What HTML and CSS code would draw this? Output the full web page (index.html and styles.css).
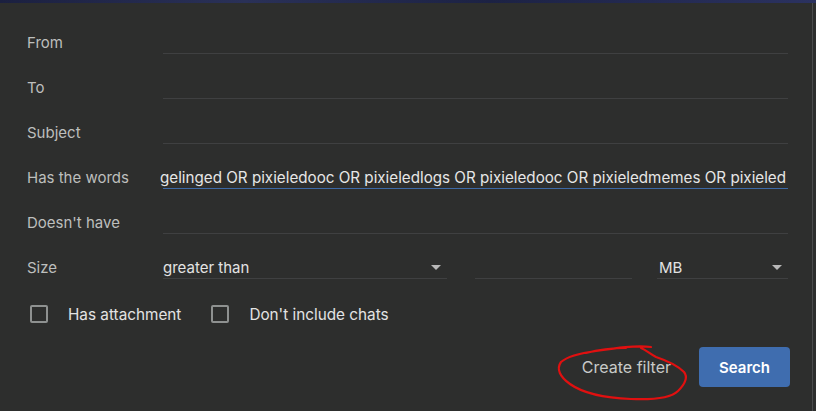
FILE: index.html
```html
<!DOCTYPE html>
<html lang="en">

<head>
    <meta charset="UTF-8">
    <meta name="viewport" content="width=device-width, initial-scale=1.0">
    <title>Search options</title>
    <link rel="stylesheet" href="styles.css">
</head>

<body>
    <div class="sky-strip"></div>

    <div class="filter-panel">
        <div class="field-row">
            <div class="field-label">From</div>
            <div class="field-input"></div>
        </div>
        <div class="field-row">
            <div class="field-label">To</div>
            <div class="field-input"></div>
        </div>
        <div class="field-row">
            <div class="field-label">Subject</div>
            <div class="field-input"></div>
        </div>
        <div class="field-row">
            <div class="field-label">Has the words</div>
            <div class="field-input focused">
                <span class="scrolled-text">gelinged OR pixieledooc OR pixieledlogs OR pixieledooc OR pixieledmemes OR pixieled</span>
            </div>
        </div>
        <div class="field-row">
            <div class="field-label">Doesn't have</div>
            <div class="field-input"></div>
        </div>
        <div class="field-row">
            <div class="field-label">Size</div>
            <div class="size-fields">
                <div class="field-input select-compare">
                    <span>greater than</span>
                    <span class="select-arrow"></span>
                </div>
                <div class="field-input size-number"></div>
                <div class="field-input select-unit">
                    <span class="unit-text">MB</span>
                    <span class="select-arrow"></span>
                </div>
            </div>
        </div>

        <div class="check-row">
            <label class="check-item">
                <span class="check-box"></span>
                Has attachment
            </label>
            <label class="check-item">
                <span class="check-box"></span>
                Don't include chats
            </label>
        </div>

        <div class="button-row">
            <button class="text-button">Create filter</button>
            <button class="search-button">Search</button>

            <!-- красная пометка от руки поверх кнопки -->
            <svg class="scribble" width="150" height="62" viewBox="0 0 150 62">
                <path d="M95 3 C80 1 60 4 40 7 C25 9 12 12 5 18 C0 25 4 33 14 40 C28 50 50 54 75 55 C100 56 115 54 122 47 C129 40 132 33 128 28 C122 22 112 17 100 13 C94 10 90 6 85 4 M70 4 C60 4 45 5 30 9"
                    fill="none" stroke="#e01010" stroke-width="2.2" stroke-linecap="round" stroke-linejoin="round"/>
            </svg>
        </div>
    </div>
</body>

</html>
```

FILE: styles.css
```css
html, body {
    margin: 0;
    padding: 0;
    background: #2d2e2d;
    font-family: Inter, Roboto, "Liberation Sans", Arial, sans-serif;
    overflow: hidden;
}

/* полоска фоновой картинки сверху */
.sky-strip {
    height: 3px;
    background: linear-gradient(90deg, #1b2040, #2a3158 30%, #1c2244 60%, #2b3260);
}

.filter-panel {
    width: 785px;
    height: 391px;
    padding: 17px 0 0 27px;
    border-right: 1px solid #4a4b4c;
    background: #2d2e2d;
}

.field-row {
    display: flex;
    align-items: center;
    height: 45px;
}

.field-label {
    width: 136px;
    font-size: 15px;
    color: #bdbfbd;
}

.field-input {
    width: 625px;
    height: 22px;
    border-bottom: 1px solid #3f4041;
    font-size: 15px;
    color: #e3e3e3;
    display: flex;
    align-items: center;
    white-space: nowrap;
    box-sizing: border-box;
    margin-top: 1px;
}

.field-input.focused {
    border-bottom-color: #3d69a6;
}

.scrolled-text {
    margin-left: -3px;
    font-size: 15.2px;
    color: #e6e6e6;
}

.size-fields {
    display: flex;
    width: 625px;
}

.select-compare {
    width: 284px;
    justify-content: space-between;
}

.size-number {
    width: 157px;
    margin-left: 28px;
}

.select-unit {
    width: 131px;
    margin-left: 25px;
    justify-content: space-between;
}

.unit-text {
    margin-left: 2px;
}

.select-arrow {
    width: 0;
    height: 0;
    border-left: 5px solid transparent;
    border-right: 5px solid transparent;
    border-top: 5px solid #b8b8b8;
    margin-right: 6px;
}

.check-row {
    display: flex;
    align-items: center;
    height: 48px;
    padding-left: 3px;
}

.check-item {
    display: flex;
    align-items: center;
    font-size: 15.3px;
    color: #e3e3e3;
    margin-right: 30px;
}

.check-box {
    width: 14px;
    height: 14px;
    border: 2px solid #8e9190;
    border-radius: 2px;
    margin-right: 20px;
}

.button-row {
    position: relative;
    display: flex;
    justify-content: flex-end;
    align-items: center;
    width: 763px;
    margin-top: 9px;
}

.text-button {
    background: none;
    border: none;
    font-family: inherit;
    font-size: 16px;
    color: #c8cac8;
    padding: 0 16px;
    height: 40px;
    margin-right: 12px;
}

.search-button {
    width: 91px;
    height: 40px;
    background: #3f6daf;
    border: none;
    border-radius: 4px;
    font-family: inherit;
    font-size: 15px;
    font-weight: 600;
    color: #ffffff;
}

.scribble {
    position: absolute;
    left: 529px;
    top: -3px;
}
```
